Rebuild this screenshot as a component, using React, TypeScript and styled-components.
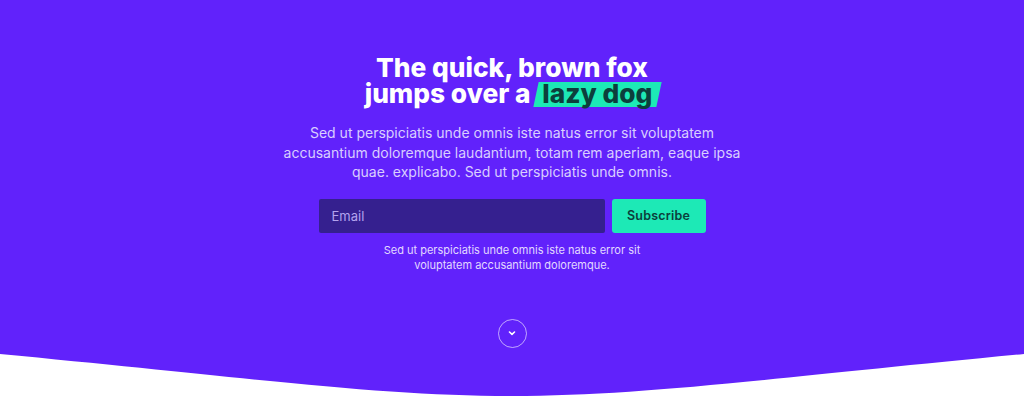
import React from "react";
import styled, { createGlobalStyle } from "styled-components";

const Global = createGlobalStyle`
  html, body { margin: 0; padding: 0; background: #ffffff; }
  body { font-family: Inter, "Noto Sans", sans-serif; -webkit-font-smoothing: antialiased; }
  * { box-sizing: border-box; }
`;

const Hero = styled.section`
  position: relative;
  height: 407px;
  background: #6122fb;
  overflow: hidden;
  display: flex;
  flex-direction: column;
  align-items: center;
  padding-top: 55px;
`;

const Title = styled.h1`
  margin: 0;
  font-family: Inter, sans-serif;
  font-weight: 800;
  font-size: 26.3px;
  line-height: 26px;
  letter-spacing: 0;
  color: #ffffff;
  text-align: center;
`;

const Highlight = styled.span`
  position: relative;
  display: inline-block;
  padding: 0 7px 0 6px;
  color: #0c3f3c;
  z-index: 0;
  &::before {
    content: "";
    position: absolute;
    left: 0;
    right: 0;
    top: 1px;
    bottom: 0;
    background: #1de9b6;
    transform: skewX(-12deg);
    z-index: -1;
  }
`;

const Lead = styled.p`
  margin: 16px 0 0;
  max-width: 470px;
  font-size: 14px;
  line-height: 19.5px;
  color: #d9ceff;
  text-align: center;
`;

const Form = styled.form`
  display: flex;
  gap: 7px;
  margin-top: 17px;
`;

const EmailInput = styled.input`
  width: 286px;
  height: 34px;
  border: none;
  border-radius: 2px;
  background: #35208f;
  padding: 0 13px;
  font-family: Inter, sans-serif;
  font-size: 13px;
  color: #ffffff;
  outline: none;
  &::placeholder { color: #b3a3ee; }
`;

const Button = styled.button`
  width: 94px;
  height: 34px;
  border: none;
  border-radius: 3px;
  background: #1de9b6;
  color: #0c3f3c;
  font-family: Inter, sans-serif;
  font-weight: 600;
  font-size: 12.5px;
  letter-spacing: 0.2px;
  cursor: pointer;
`;

const Note = styled.p`
  margin: 10px 0 0;
  max-width: 290px;
  font-size: 11px;
  line-height: 15px;
  color: #e2d9ff;
  text-align: center;
`;

const ScrollDown = styled.button`
  margin-top: 46px;
  width: 29px;
  height: 29px;
  border-radius: 50%;
  border: 1px solid rgba(255, 255, 255, 0.6);
  background: transparent;
  display: flex;
  align-items: center;
  justify-content: center;
  padding: 0;
  cursor: pointer;
`;

const Wave = styled.svg`
  position: absolute;
  left: 0;
  bottom: 0;
  width: 100%;
  height: 53px;
  display: block;
`;

export default function App() {
  return (
    <>
      <Global />
      <Hero>
        <Title>
          The quick, brown fox
          <br />
          jumps over a <Highlight>lazy dog</Highlight>
        </Title>
        <Lead>
          Sed ut perspiciatis unde omnis iste natus error sit voluptatem
          accusantium doloremque laudantium, totam rem aperiam, eaque ipsa
          quae. explicabo. Sed ut perspiciatis unde omnis.
        </Lead>
        <Form onSubmit={(e) => e.preventDefault()}>
          <EmailInput type="email" placeholder="Email" />
          <Button type="submit">Subscribe</Button>
        </Form>
        <Note>
          Sed ut perspiciatis unde omnis iste natus error sit voluptatem
          accusantium doloremque.
        </Note>
        <ScrollDown aria-label="Scroll down">
          <svg width="10" height="10" viewBox="0 0 10 10" fill="none">
            <path d="M2.5 4 L5 6.3 L7.5 4" stroke="#ffffff" strokeWidth="1.6" strokeLinecap="round" strokeLinejoin="round" />
          </svg>
        </ScrollDown>
        <Wave viewBox="0 0 1024 53" preserveAspectRatio="none">
          <path d="M0 0 C250 23.8, 380 42, 512 42 C644 42, 774 23.8, 1024 0 L1024 53 L0 53 Z" fill="#ffffff" />
        </Wave>
      </Hero>
    </>
  );
}
